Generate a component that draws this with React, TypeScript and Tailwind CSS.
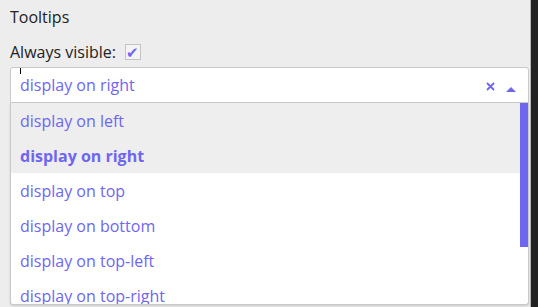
import React from 'react';

const options = [
  'display on left',
  'display on right',
  'display on top',
  'display on bottom',
  'display on top-left',
  'display on top-right',
];

export default function App() {
  const selected = 'display on right';

  return (
    <div
      className="w-[538px] h-[307px] flex overflow-hidden bg-[#ededed] text-[#222]"
      style={{ fontFamily: '"Open Sans", "Noto Sans", sans-serif' }}
    >
      <div className="flex-1 pl-[10px] pr-px">
        <div className="pt-[6px] h-[36px] text-[16px] leading-[22px]">Tooltips</div>

        <div className="flex items-center h-[24px] mt-[4px] text-[16px]">
          <span>Always visible:</span>
          <span className="ml-[9px] w-[16px] h-[16px] border border-[#c4c4c4] bg-[#f4f4f4] flex items-center justify-center text-[#6f66f0] text-[15px] leading-none">
            ✔
          </span>
        </div>

        <div className="mt-[3px] relative h-[36px] bg-white border border-[#c9c9c9] rounded-t-[3px] flex items-center pl-[9px] pr-[12px]">
          <span className="absolute left-[9px] top-0 w-px h-[6px] bg-black" />
          <span className="flex-1 text-[16px] text-[#6f66f0]">{selected}</span>
          <svg width="9" height="9" viewBox="0 0 9 9" className="mr-[11px] mt-[2px]">
            <path d="M1 1 L8 8 M8 1 L1 8" stroke="#6f66f0" strokeWidth="1.8" />
          </svg>
          <svg width="10" height="6" viewBox="0 0 10 6" className="mt-[7px]">
            <path d="M0 6 L5 1 L10 6 Z" fill="#6f66f0" />
          </svg>
        </div>

        <div className="relative h-[202px] bg-white border-x border-b border-[#c9c9c9] rounded-b-[3px] shadow-[0_1px_2px_rgba(0,0,0,0.15)] overflow-hidden">
          {options.map((o, i) => (
            <div
              key={o}
              className={`h-[35px] flex items-center pl-[9px] text-[16px] text-[#6f66f0] ${
                i < 2 ? 'bg-[#eeeeee]' : ''
              } ${o === selected ? 'font-bold' : ''}`}
            >
              {o}
            </div>
          ))}
          <div className="absolute right-0 top-0 w-[8px] h-[144px] bg-[#6f66f0]" />
        </div>
      </div>
      <div className="w-px bg-[#b5b5b5]" />
      <div className="w-[7px] bg-[#222]" />
    </div>
  );
}
